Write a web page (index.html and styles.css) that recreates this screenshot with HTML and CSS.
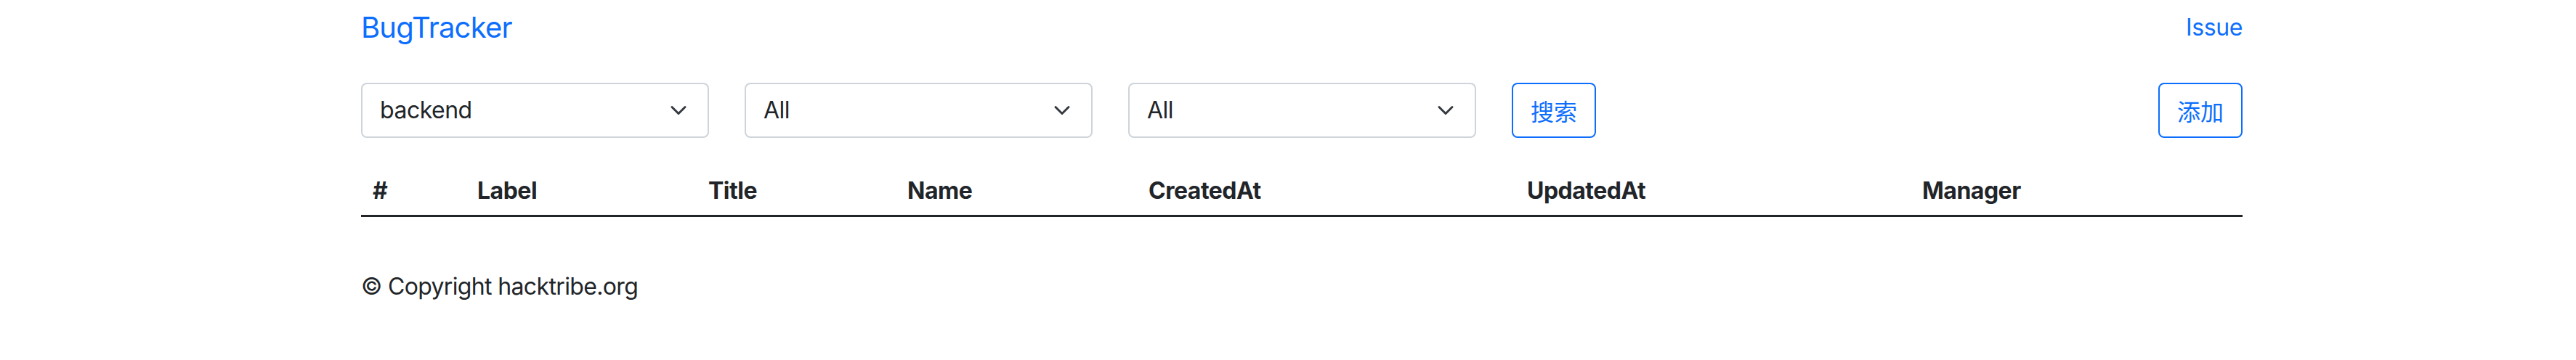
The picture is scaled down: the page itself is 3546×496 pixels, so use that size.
FILE: index.html
```html
<!DOCTYPE html>
<html lang="zh">
<head>
<meta charset="utf-8">
<title>BugTracker</title>
<link rel="stylesheet" href="styles.css">
</head>
<body>
<div class="page">
  <header class="nav">
    <a class="brand" href="#">BugTracker</a>
    <a class="nav-link" href="#">Issue</a>
  </header>

  <div class="filters">
    <div class="select"><span>backend</span><svg viewBox="0 0 16 16"><path d="m2 5 6 6 6-6"/></svg></div>
    <div class="select"><span>All</span><svg viewBox="0 0 16 16"><path d="m2 5 6 6 6-6"/></svg></div>
    <div class="select"><span>All</span><svg viewBox="0 0 16 16"><path d="m2 5 6 6 6-6"/></svg></div>
    <button class="btn">搜索</button>
    <button class="btn btn-add">添加</button>
  </div>

  <table class="table">
    <thead>
      <tr>
        <th class="c-id">#</th>
        <th class="c-label">Label</th>
        <th class="c-title">Title</th>
        <th class="c-name">Name</th>
        <th class="c-created">CreatedAt</th>
        <th class="c-updated">UpdatedAt</th>
        <th class="c-manager">Manager</th>
      </tr>
    </thead>
    <tbody></tbody>
  </table>

  <footer class="footer">© Copyright hacktribe.org</footer>
</div>
</body>
</html>
```
FILE: styles.css
```css
html, body {
  margin: 0;
  padding: 0;
  background: #fff;
}
body {
  font-family: Inter, "Noto Sans CJK SC", sans-serif;
  font-size: 32px;
  line-height: 1.5;
  color: #212529;
  letter-spacing: -0.5px;
}
.page {
  width: 2590px;
  margin-left: 497px;
}
.nav {
  display: flex;
  justify-content: space-between;
  align-items: center;
  padding-top: 8px;
  height: 60px;
  margin-bottom: 46px;
}
.brand {
  font-size: 40px;
  line-height: 60px;
  color: #0d6efd;
  text-decoration: none;
  letter-spacing: -0.8px;
}
.nav-link {
  font-size: 32px;
  line-height: 48px;
  color: #0d6efd;
  text-decoration: none;
  letter-spacing: -0.4px;
}
.filters {
  display: flex;
  gap: 49px;
  height: 76px;
}
.select {
  box-sizing: border-box;
  width: 479px;
  height: 76px;
  border: 2px solid #ced4da;
  border-radius: 8px;
  padding: 12px 24px 12px 24px;
  display: flex;
  align-items: center;
  justify-content: space-between;
  background: #fff;
}
.select svg {
  width: 24px;
  height: 24px;
  margin-right: 4px;
  fill: none;
  stroke: #343a40;
  stroke-width: 2;
  stroke-linecap: round;
  stroke-linejoin: round;
}
.btn {
  box-sizing: border-box;
  height: 76px;
  padding: 12px 24px;
  border: 2px solid #0d6efd;
  border-radius: 8px;
  background: #fff;
  color: #0d6efd;
  font-family: "Noto Sans CJK SC", sans-serif;
  font-size: 32px;
  line-height: 48px;
  width: 116px;
  white-space: nowrap;
  letter-spacing: 0;
}
.btn-add {
  margin-left: auto;
}
.table {
  width: 2590px;
  table-layout: fixed;
  border-collapse: collapse;
  margin-top: 41px;
}
.table th {
  box-sizing: border-box;
  text-align: left;
  font-weight: 700;
  padding: 8px 16px 9px;
  line-height: 48px;
  border-bottom: 3px solid #212529;
}
.c-id { width: 144px; }
.c-label { width: 318px; }
.c-title { width: 274px; }
.c-name { width: 332px; }
.c-created { width: 521px; }
.c-updated { width: 544px; }
.c-manager { width: auto; }
.footer {
  margin-top: 72px;
  line-height: 48px;
  letter-spacing: -0.65px;
}
```
